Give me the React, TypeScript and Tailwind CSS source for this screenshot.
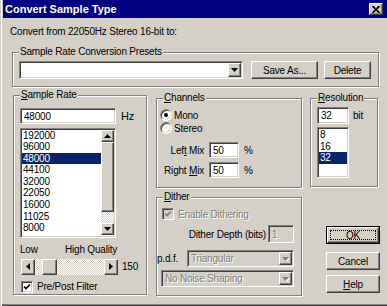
import React from "react";

const sunken =
  "border border-t-[#808080] border-l-[#808080] border-b-white border-r-white shadow-[inset_1px_1px_0_#404040,inset_-1px_-1px_0_#d4d0c8]";
const raised =
  "border border-t-white border-l-white border-b-[#404040] border-r-[#404040] shadow-[inset_-1px_-1px_0_#808080,inset_1px_1px_0_#d4d0c8]";
const hatch = "bg-[image:repeating-conic-gradient(#fff_0_25%,#d4d0c8_0_50%)] bg-[length:2px_2px]";
const greyText = "text-[#808080] [text-shadow:1px_1px_0_#fff]";

type Dir = "up" | "down" | "left" | "right";

const Arrow = ({ dir, off }: { dir: Dir; off?: boolean }) => {
  const pts = {
    up: "0,4 7,4 3.5,0",
    down: "0,0 7,0 3.5,4",
    left: "4,0 4,7 0,3.5",
    right: "0,0 0,7 4,3.5",
  }[dir];
  const vert = dir === "up" || dir === "down";
  return (
    <svg width={vert ? 7 : 4} height={vert ? 4 : 7} viewBox={vert ? "0 0 7 4" : "0 0 4 7"}>
      {off && <polygon points={pts} fill="#fff" transform="translate(1 1)" />}
      <polygon points={pts} fill={off ? "#808080" : "#000"} />
    </svg>
  );
};

const Group = ({ label, className, children }: { label: React.ReactNode; className: string; children?: React.ReactNode }) => (
  <div className={`relative border border-[#808080] shadow-[1px_1px_0_#fff,inset_1px_1px_0_#fff] ${className}`}>
    <span className="absolute left-[6px] -top-[7px] bg-[#d4d0c8] px-px leading-[12px]">{label}</span>
    {children}
  </div>
);

const Combo = ({ text, off, className }: { text?: string; off?: boolean; className: string }) => (
  <div className={`${sunken} ${off ? "bg-[#d4d0c8]" : "bg-white"} p-px flex ${className}`}>
    <div className={`flex-1 pl-[2px] flex items-center ${off ? greyText : ""}`}>{text}</div>
    <div className={`${raised} w-[13px] bg-[#d4d0c8] flex items-center justify-center`}>
      <Arrow dir="down" off={off} />
    </div>
  </div>
);

const Button = ({ children, className }: { children: React.ReactNode; className: string }) => (
  <div className={`${raised} bg-[#d4d0c8] flex items-center justify-center ${className}`}>{children}</div>
);

const ListBox = ({ items, selected, className, scroll }: { items: string[]; selected: string; className: string; scroll?: boolean }) => (
  <div className={`${sunken} bg-white p-px flex overflow-hidden ${className}`}>
    <div className="flex-1 overflow-hidden">
      {items.map((it) => (
        <div key={it} className={`leading-[11.6px] h-[11.6px] pl-px ${it === selected ? "bg-[#0a246a] text-white" : ""}`}>
          {it}
        </div>
      ))}
    </div>
    {scroll && (
      <div className="w-[13px] flex flex-col">
        <div className={`${raised} h-[13px] bg-[#d4d0c8] flex items-center justify-center`}>
          <Arrow dir="up" />
        </div>
        <div className={`${raised} h-[71px] bg-[#d4d0c8]`} />
        <div className={`h-[11px] ${hatch}`} />
        <div className={`${raised} h-[13px] bg-[#d4d0c8] flex items-center justify-center`}>
          <Arrow dir="down" />
        </div>
      </div>
    )}
  </div>
);

const Check = ({ off }: { off?: boolean }) => (
  <div className={`${sunken} w-[12px] h-[12px] ${off ? "bg-[#d4d0c8]" : "bg-white"} flex items-center justify-center`}>
    <svg width="8" height="8" viewBox="0 0 8 8">
      <polyline points="1,3.5 3,5.5 7,1.5" fill="none" stroke={off ? "#808080" : "#000"} strokeWidth="1.6" />
    </svg>
  </div>
);

const Radio = ({ on }: { on?: boolean }) => (
  <div className="w-[12px] h-[12px] rounded-full border border-t-[#808080] border-l-[#808080] border-b-white border-r-white shadow-[inset_1px_1px_0_#404040,inset_-1px_-1px_0_#d4d0c8] bg-white flex items-center justify-center">
    {on && <div className="w-[4px] h-[4px] rounded-full bg-black" />}
  </div>
);

const Field = ({ value, className, off }: { value: string; className: string; off?: boolean }) => (
  <div className={`${sunken} ${off ? "bg-[#d4d0c8] " + greyText : "bg-white"} pl-[3px] flex items-center ${className}`}>{value}</div>
);

export default function App() {
  return (
    <div className="w-[387px] h-[306px] bg-[#d4d0c8] font-['Liberation_Sans',Arial,sans-serif] text-[10px] tracking-[-0.2px] text-black overflow-hidden shadow-[inset_1px_0_0_#d4d0c8,inset_2px_0_0_#fff,inset_0_-1px_0_#404040,inset_0_-2px_0_#808080]">
      <div className="ml-[3px] h-[18px] bg-[#000080] flex items-center pl-[2px] pr-[4px]">
        <span className="text-white font-bold text-[11px] tracking-normal">Convert Sample Type</span>
        <div className={`${raised} ml-auto w-[14px] h-[12px] bg-[#d4d0c8] flex items-center justify-center`}>
          <svg width="8" height="7" viewBox="0 0 8 7">
            <path d="M0.5 0 L7.5 7 M7.5 0 L0.5 7" stroke="#000" strokeWidth="1.7" />
          </svg>
        </div>
      </div>

      <div className="ml-[10px] mt-[8px] leading-[12px]">Convert from 22050Hz Stereo 16-bit to:</div>

      <Group label="Sample Rate Conversion Presets" className="ml-[12px] mt-[14px] w-[367px] h-[35px]">
        <div className="flex pl-[6px] pt-[8px]">
          <Combo className="w-[224px] h-[18px]" />
          <Button className="ml-[8px] w-[67px] h-[18px]">Save As...</Button>
          <Button className="ml-[6px] w-[47px] h-[18px]">Delete</Button>
        </div>
      </Group>

      <div className="flex mt-[8px]">
        <Group label={<><u>S</u>ample Rate</>} className="ml-[13px] w-[134px] h-[200px]">
          <div className="pl-[6px] pt-[12px]">
            <div className="flex items-center">
              <Field value="48000" className="w-[96px] h-[16px]" />
              <span className="ml-[5px] text-[11px]">Hz</span>
            </div>
            <ListBox
              className="mt-[3px] w-[96px] h-[110px]"
              items={["192000", "96000", "48000", "44100", "32000", "22050", "16000", "11025", "8000"]}
              selected="48000"
              scroll
            />
            <div className="mt-[6px] flex leading-[12px]">
              <span className="w-[45px]">Low</span>
              <span>High Quality</span>
            </div>
            <div className="mt-[3px] flex items-center">
              <div className="ml-px w-[97px] h-[16px] flex">
                <div className={`${raised} w-[14px] bg-[#d4d0c8] flex items-center justify-center`}>
                  <Arrow dir="left" />
                </div>
                <div className={`flex-1 ${hatch}`}>
                  <div className={`${raised} ml-[7px] w-[15px] h-full bg-[#d4d0c8]`} />
                </div>
                <div className={`${raised} w-[14px] bg-[#d4d0c8] flex items-center justify-center`}>
                  <Arrow dir="right" />
                </div>
              </div>
              <span className="ml-[4px]">150</span>
            </div>
            <div className="mt-[6px] flex items-center h-[12px]">
              <div className="ml-px">
                <Check />
              </div>
              <span className="ml-[4px]">Pre/Post Filter</span>
            </div>
          </div>
        </Group>

        <div className="flex flex-col ml-[9px] w-[146px]">
          <Group label={<><u>C</u>hannels</>} className="mt-[3px] h-[90px]">
            <div className="pt-[10px] pl-[3px]">
              <div className="flex items-center h-[12px]">
                <Radio on />
                <span className="ml-[2px]">Mono</span>
              </div>
              <div className="flex items-center h-[12px] mt-px">
                <Radio />
                <span className="ml-[2px]">Stereo</span>
              </div>
              <div className="flex items-center mt-[8px]">
                <span className="w-[44px] text-right">Lef<u>t</u> Mix</span>
                <Field value="50" className="ml-[5px] w-[30px] h-[16px]" />
                <span className="ml-[5px]">%</span>
              </div>
              <div className="flex items-center mt-[4px]">
                <span className="w-[44px] text-right">Right <u>M</u>ix</span>
                <Field value="50" className="ml-[5px] w-[30px] h-[16px]" />
                <span className="ml-[5px]">%</span>
              </div>
            </div>
          </Group>

          <Group label={<><u>D</u>ither</>} className="mt-[9px] h-[99px]">
            <div className="pt-[10px]">
              <div className="flex items-center h-[12px] ml-[5px]">
                <Check off />
                <span className={`ml-[4px] ${greyText}`}>Enable Dithering</span>
              </div>
              <div className="flex items-center justify-end pr-[7px] mt-[5px]">
                <span>Dither Depth (bits)</span>
                <Field value="1" off className="ml-[2px] w-[26px] h-[18px]" />
              </div>
              <div className="flex items-center mt-[7px]">
                <span className="w-[30px]">p.d.f.</span>
                <Combo text="Triangular" off className="w-[107px] h-[17px]" />
              </div>
              <Combo text="No Noise Shaping" off className="mt-[3px] ml-[4px] w-[133px] h-[17px]" />
            </div>
          </Group>
        </div>

        <div className="flex flex-col ml-[8px]">
          <Group label={<><u>R</u>esolution</>} className="mt-[3px] w-[68px] h-[89px]">
            <div className="pt-[8px] pl-[6px]">
              <div className="flex items-center">
                <Field value="32" className="w-[32px] h-[17px]" />
                <span className="ml-[4px]">bit</span>
              </div>
              <ListBox className="mt-[3px] w-[32px] h-[51px]" items={["8", "16", "32"]} selected="32" />
            </div>
          </Group>

          <div className="mt-[39px] ml-[16px] w-[54px] h-[18px] border border-black">
            <div className={`${raised} h-full bg-[#d4d0c8] p-[2px]`}>
              <div className="h-full border border-dotted border-black flex items-center justify-center">OK</div>
            </div>
          </div>
          <Button className="mt-[8px] ml-[16px] w-[54px] h-[18px]">Cancel</Button>
          <Button className="mt-[5px] ml-[16px] w-[54px] h-[18px]">
            <span>
              <u>H</u>elp
            </span>
          </Button>
        </div>
      </div>
    </div>
  );
}
